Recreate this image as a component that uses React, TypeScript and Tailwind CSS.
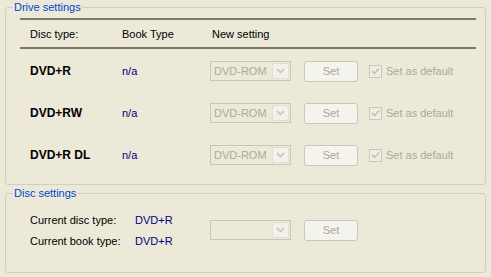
import React from "react";

const rows = ["DVD+R", "DVD+RW", "DVD+R DL"];

function Combo({ value }: { value?: string }) {
  return (
    <div className="flex h-[20px] w-[81px] items-stretch border border-[#C9C7BA] bg-[#ECE9D8] p-[1px]">
      <span className="flex flex-1 items-center pl-[2px] text-[#ACA899]">{value}</span>
      <span className="flex w-[17px] items-center justify-center rounded-[2px] border border-[#E2E0D6] bg-[#F2F1EB]">
        <svg width="9" height="6" viewBox="0 0 9 6">
          <polyline points="1,1 4.5,4.5 8,1" fill="none" stroke="#CCCABC" strokeWidth="1.8" />
        </svg>
      </span>
    </div>
  );
}

function SetButton() {
  return (
    <div className="flex h-[21px] w-[54px] items-center justify-center rounded-[3px] border border-[#CBC8BA] bg-[#F4F3EE] text-[#ACA899]">
      Set
    </div>
  );
}

function DefaultCheck() {
  return (
    <div className="flex items-center">
      <span className="flex h-[13px] w-[13px] items-center justify-center border border-[#CBC8BA] bg-[#EFEDE4]">
        <svg width="9" height="9" viewBox="0 0 9 9">
          <polyline points="1,4 3.5,6.5 8,1.5" fill="none" stroke="#C8C5B4" strokeWidth="1.8" />
        </svg>
      </span>
      <span className="ml-[4px] text-[#ACA899]">Set as default</span>
    </div>
  );
}

export default function App() {
  return (
    <div className="flex h-[277px] w-[491px] flex-col bg-[#ECE9D8] px-[5px] font-['Liberation_Sans',Arial,sans-serif] text-[11px] leading-[14px] text-black">
      <fieldset className="h-[185px] rounded-[3px] border border-[#D0D0BF]">
        <legend className="ml-[7px] px-[1px] text-[#0046D5]">Drive settings</legend>
        <div className="ml-[14px] mt-[4px] w-[456px]">
          <div className="h-[2px] bg-[#7A7866]" />
          <div className="flex h-[27px] items-center pl-[10px]">
            <span className="w-[92px]">Disc type:</span>
            <span className="w-[88px]">Book Type</span>
            <span className="pl-[2px]">New setting</span>
          </div>
          <div className="h-[2px] bg-[#7A7866]" />
          <div className="mt-[1px]">
            {rows.map((r) => (
              <div key={r} className="flex h-[42px] items-center pl-[10px]">
                <span className="w-[92px] text-[12px] font-bold">{r}</span>
                <span className="w-[88px] text-[#000080]">n/a</span>
                <Combo value="DVD-ROM" />
                <div className="ml-[13px]">
                  <SetButton />
                </div>
                <div className="ml-[11px]">
                  <DefaultCheck />
                </div>
              </div>
            ))}
          </div>
        </div>
      </fieldset>
      <fieldset className="mt-[1px] h-[87px] rounded-[3px] border border-[#D0D0BF]">
        <legend className="ml-[7px] px-[1px] text-[#0046D5]">Disc settings</legend>
        <div className="mt-[9px] flex items-center pl-[24px]">
          <div className="flex w-[180px] flex-col">
            <div className="flex h-[21px] items-center">
              <span className="w-[105px]">Current disc type:</span>
              <span className="text-[#000080]">DVD+R</span>
            </div>
            <div className="flex h-[21px] items-center">
              <span className="w-[105px]">Current book type:</span>
              <span className="text-[#000080]">DVD+R</span>
            </div>
          </div>
          <div className="flex items-center">
            <Combo />
            <div className="ml-[13px]">
              <SetButton />
            </div>
          </div>
        </div>
      </fieldset>
    </div>
  );
}
